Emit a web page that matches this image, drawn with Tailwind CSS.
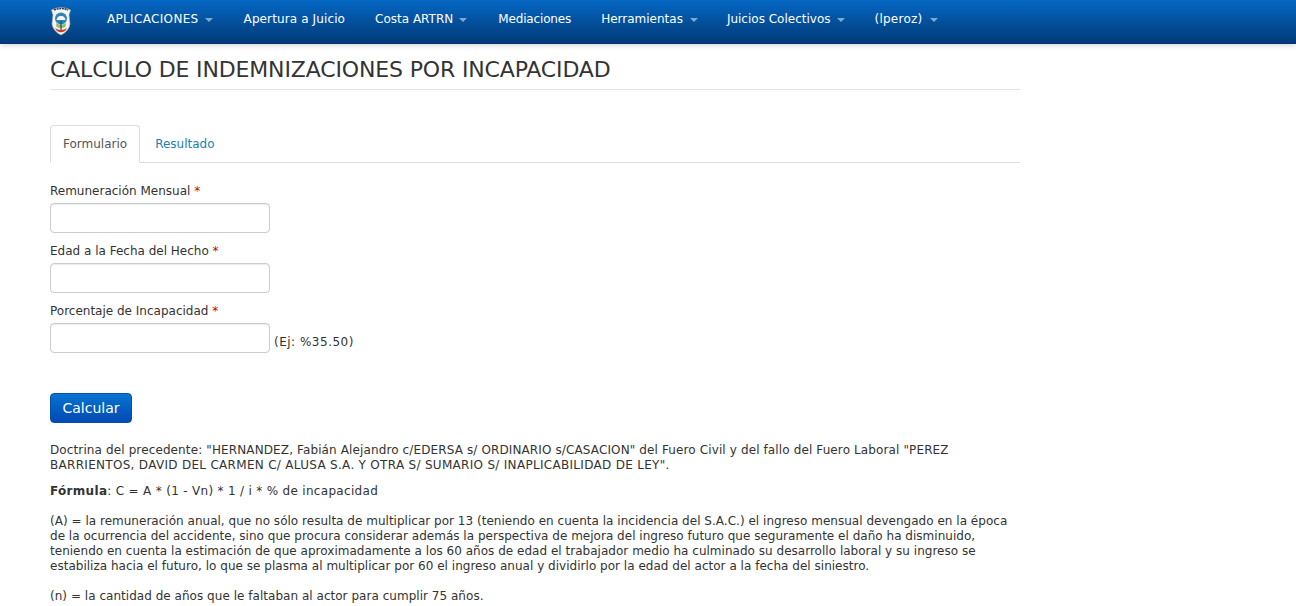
<!DOCTYPE html>
<html lang="es">
<head>
    <meta charset="UTF-8">
    <title>Calculo de indemnizaciones</title>
    <script src="https://cdn.jsdelivr.net/npm/@tailwindcss/browser@4"></script>
</head>
<body class="bg-white font-['DejaVu_Sans',sans-serif] text-[12px] leading-[15px] text-[#333] h-[606px] overflow-hidden">
    <nav class="h-[44px] bg-gradient-to-b from-[#0568c4] to-[#023a78] border-b border-[#02366e] shadow-[0_1px_6px_rgba(0,0,0,0.2)] flex items-center pl-[50px] pb-[4px] text-white">
        <svg class="w-[22px] h-[30px] mr-[35px] mt-[3px]" viewBox="0 0 22 30">
            <path d="M1.5 4 Q11 -1 20.5 4 L19 9 L20 18 Q19 25 11 29 Q3 25 2 18 L3 9 Z" fill="#f4f4ec" stroke="#aeb9bb" stroke-width="0.6"/>
            <path d="M4 4 Q11 1 18 4" fill="none" stroke="#2b3d4f" stroke-width="1.6" stroke-dasharray="2 0.7"/>
            <circle cx="11" cy="12.5" r="6" fill="#2f86b5"/>
            <path d="M6.5 14 Q7.5 9.5 11 10 Q14.5 9.5 15.5 14 Z" fill="#f2f6f4"/>
            <path d="M6 17 Q11 20.5 16 17 L15.5 21 Q11 23 6.5 21 Z" fill="#8fbf6a"/>
            <path d="M10.4 15 H11.6 V24 H10.4 Z" fill="#27456a"/>
            <path d="M5 22 Q11 26 17 22 L15 25 Q11 27.5 7 25 Z" fill="#c8402f"/>
        </svg>
        <ul class="flex items-center gap-[30px]">
            <li class="flex items-center gap-[6px]"><span class="tracking-[0.33px]">APLICACIONES</span><span class="w-0 h-0 border-x-[4px] border-x-transparent border-t-[4px] border-t-white/50"></span></li>
            <li class="ml-[1px] tracking-[0.12px]">Apertura a Juicio</li>
            <li class="flex items-center gap-[6px]"><span>Costa ARTRN</span><span class="w-0 h-0 border-x-[4px] border-x-transparent border-t-[4px] border-t-white/50"></span></li>
            <li class="ml-[1px] tracking-[-0.15px]">Mediaciones</li>
            <li class="flex items-center gap-[7px]"><span>Herramientas</span><span class="w-0 h-0 border-x-[4px] border-x-transparent border-t-[4px] border-t-white/50"></span></li>
            <li class="flex items-center gap-[7px] -ml-[1px]"><span>Juicios Colectivos</span><span class="w-0 h-0 border-x-[4px] border-x-transparent border-t-[4px] border-t-white/50"></span></li>
            <li class="flex items-center gap-[7px] -ml-[1px]"><span class="tracking-[0.25px]">(lperoz)</span><span class="w-0 h-0 border-x-[4px] border-x-transparent border-t-[4px] border-t-white/50"></span></li>
        </ul>
    </nav>

    <main class="ml-[50px] w-[970px]">
        <h1 class="mt-[11px] pb-[4px] text-[22px] leading-[30px] border-b border-[#e5e5e5] tracking-[-0.15px]">CALCULO DE INDEMNIZACIONES POR INCAPACIDAD</h1>

        <div class="mt-[35px] h-[38px] flex border-b border-[#ddd]">
            <a class="h-[38px] px-[12px] flex items-center bg-white border border-[#ddd] border-b-white rounded-t-[4px] text-[#555]">Formulario</a>
            <a class="h-[38px] px-[15px] flex items-center text-[#1c82ad]">Resultado</a>
        </div>

        <form class="mt-[20px]">
            <label class="block h-[20px] pt-[1px]">Remuneración Mensual <span class="text-[#c00]">*</span></label>
            <input type="text" class="block w-[220px] h-[30px] border border-[#ccc] rounded-[4px] shadow-[inset_0_1px_1px_rgba(0,0,0,0.075)]">
            <label class="block h-[20px] mt-[10px] pt-[1px]">Edad a la Fecha del Hecho <span class="text-[#c00]">*</span></label>
            <input type="text" class="block w-[220px] h-[30px] border border-[#ccc] rounded-[4px] shadow-[inset_0_1px_1px_rgba(0,0,0,0.075)]">
            <label class="block h-[20px] mt-[10px] pt-[1px]">Porcentaje de Incapacidad <span class="text-[#c00]">*</span></label>
            <div class="flex items-end">
                <input type="text" class="block w-[220px] h-[30px] border border-[#ccc] rounded-[4px] shadow-[inset_0_1px_1px_rgba(0,0,0,0.075)]">
                <span class="ml-[4px] mb-[3px] tracking-[0.5px]">(Ej: %35.50)</span>
            </div>
            <button type="button" class="block mt-[40px] w-[82px] h-[30px] rounded-[4px] bg-gradient-to-b from-[#0a74d2] to-[#0349b4] border border-[#0550a8] text-white text-[14px]">Calcular</button>
        </form>

        <div class="mt-[20px]">
            <p class="tracking-[0.12px]">Doctrina del precedente: "HERNANDEZ, Fabián Alejandro c/EDERSA s/ ORDINARIO s/CASACION" del Fuero Civil y del fallo del Fuero Laboral "PEREZ <span class="tracking-[0.3px]">BARRIENTOS, DAVID DEL CARMEN C/ ALUSA S.A. Y OTRA S/ SUMARIO S/ INAPLICABILIDAD DE LEY".</span></p>
            <p class="mt-[11px] tracking-[0.31px]"><b>Fórmula</b>: C = A * (1 - Vn) * 1 / i * % de incapacidad</p>
            <p class="mt-[15px] tracking-[0.02px]">(A) = la remuneración anual, que no sólo resulta de multiplicar por 13 (teniendo en cuenta la incidencia del S.A.C.) el ingreso mensual devengado en la época de la ocurrencia del accidente, sino que procura considerar además la perspectiva de mejora del ingreso futuro que seguramente el daño ha disminuido, teniendo en cuenta la estimación de que aproximadamente a los 60 años de edad el trabajador medio ha culminado su desarrollo laboral y su ingreso se estabiliza hacia el futuro, lo que se plasma al multiplicar por 60 el ingreso anual y dividirlo por la edad del actor a la fecha del siniestro.</p>
            <p class="mt-[15px] tracking-[0.03px]">(n) = la cantidad de años que le faltaban al actor para cumplir 75 años.</p>
        </div>
    </main>
</body>
</html>
